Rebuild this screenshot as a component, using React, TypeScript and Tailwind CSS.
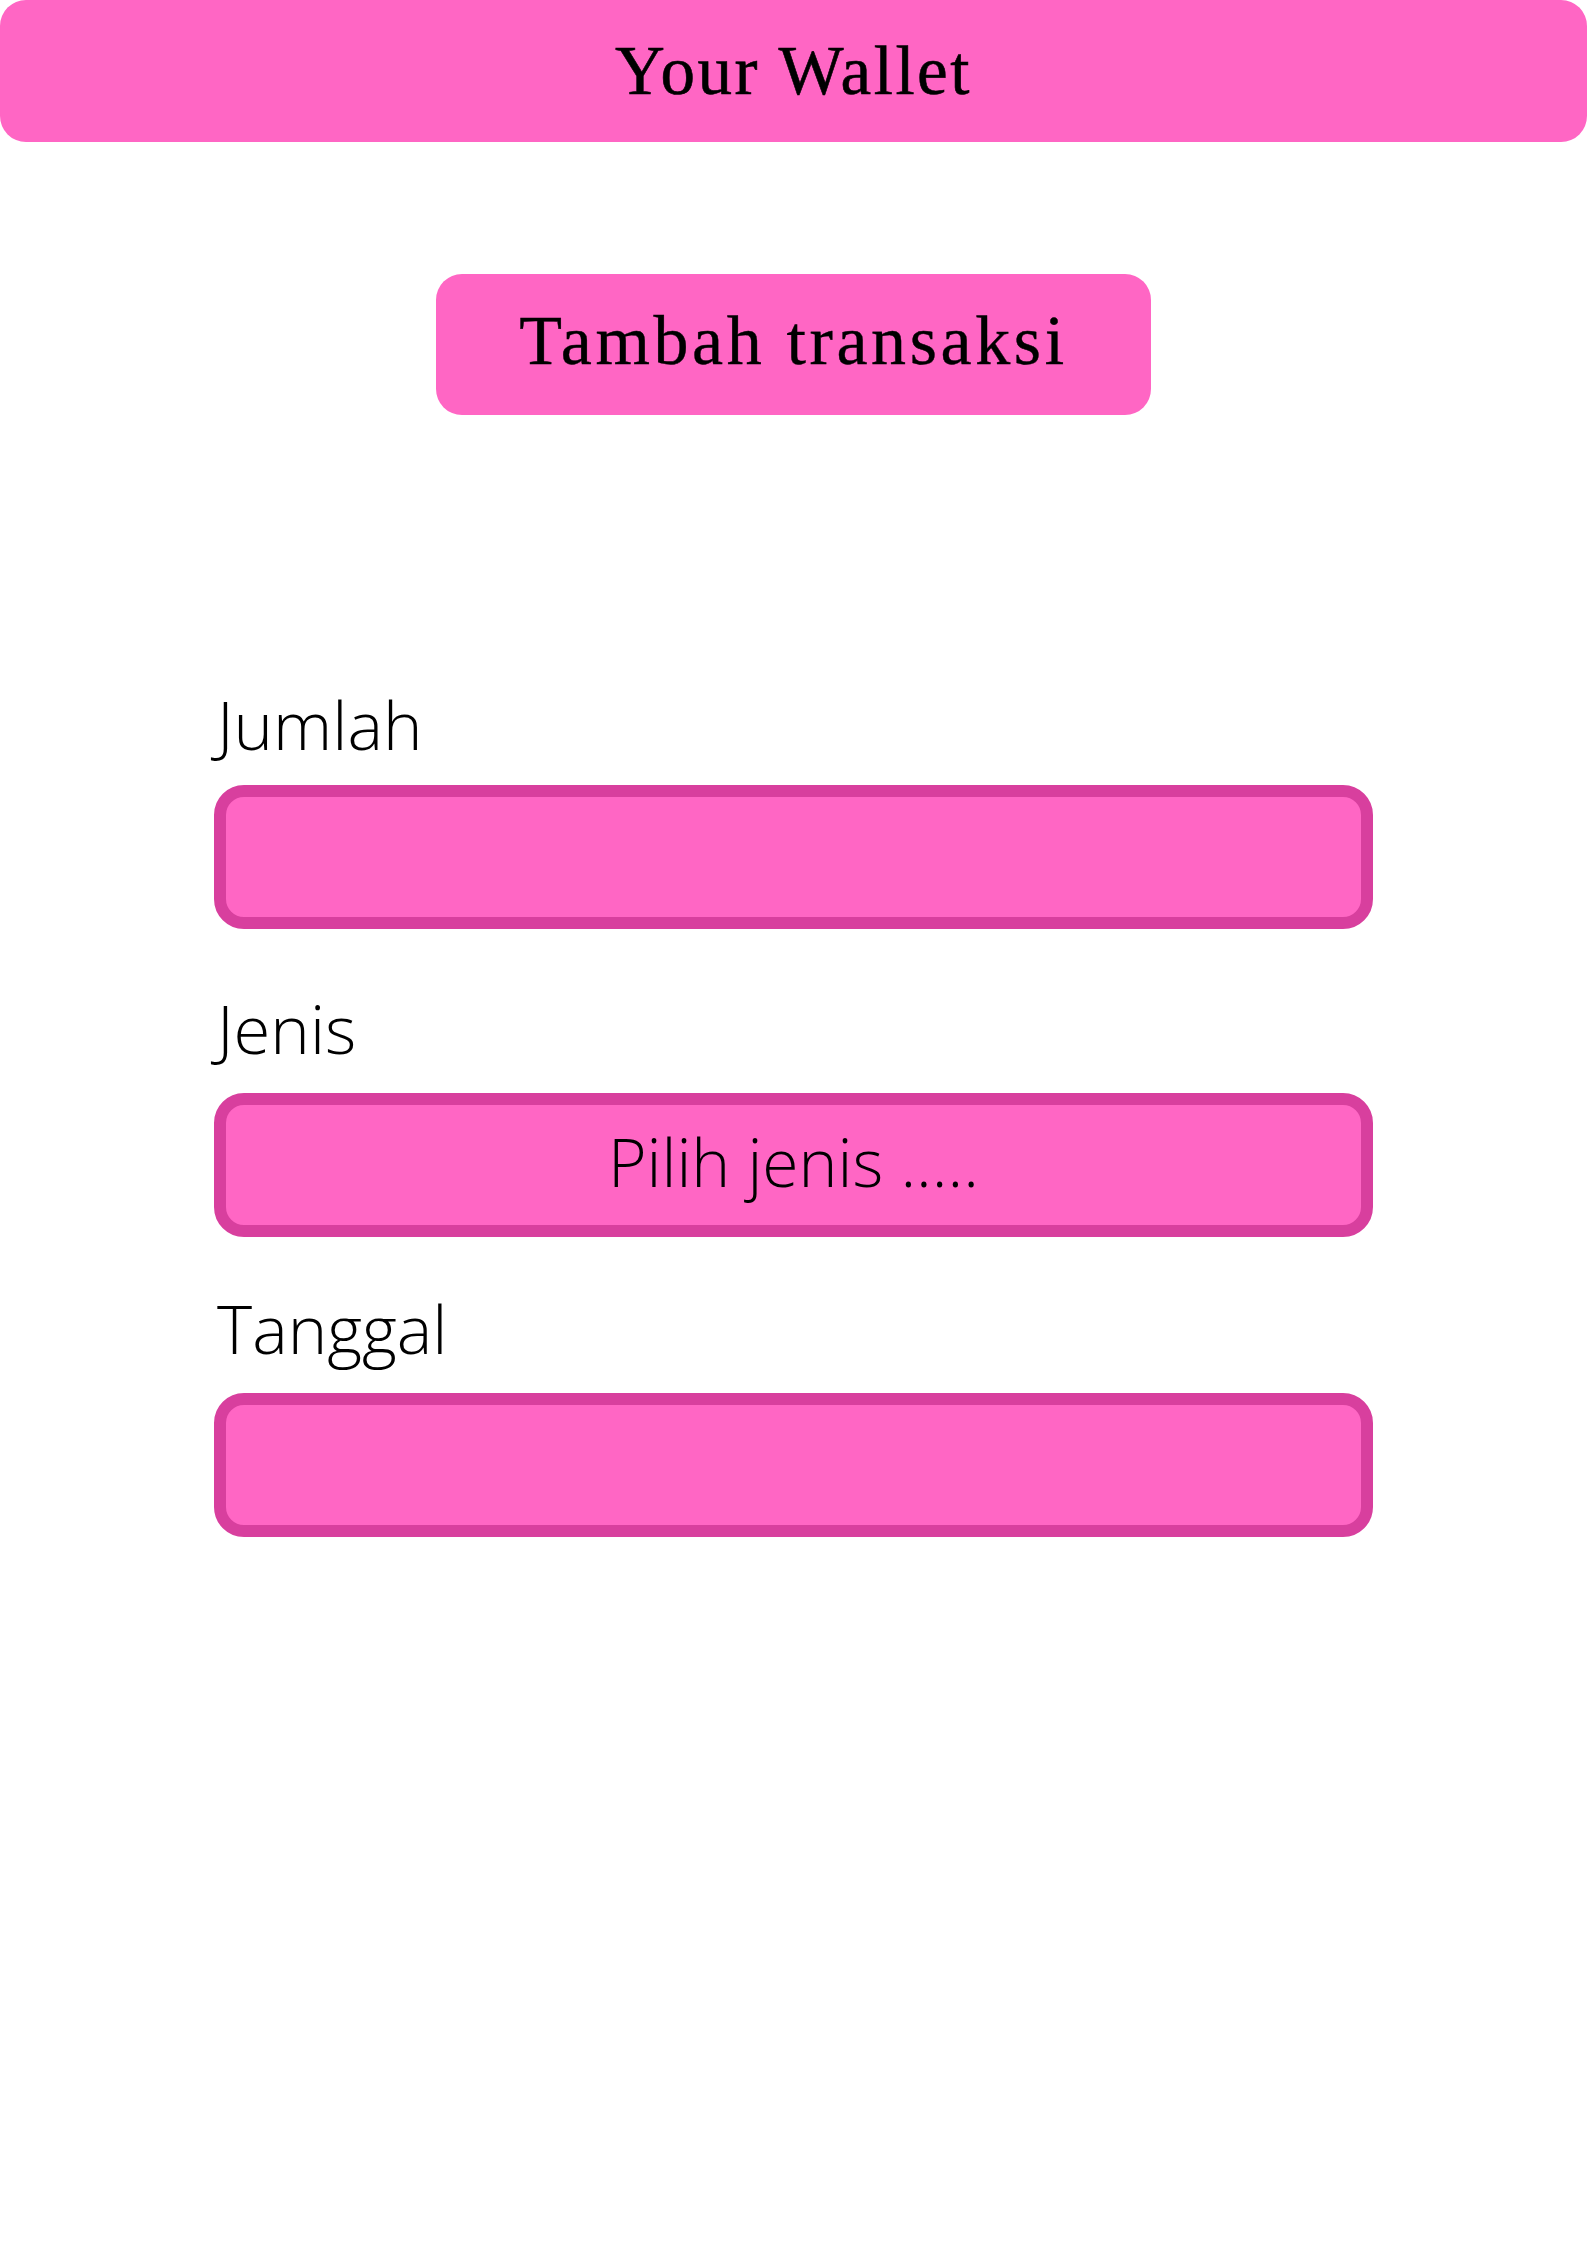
import React from "react";

const serif = { fontFamily: '"Liberation Serif", "Times New Roman", serif' };
const sans = { fontFamily: '"Open Sans", "Noto Sans", sans-serif' };

function Field({ label, children, labelClass }: { label: string; children?: React.ReactNode; labelClass: string }) {
  return (
    <div className="flex flex-col">
      <div className={`pl-[3px] text-[67px] leading-none font-light text-black ${labelClass}`} style={sans}>
        {label}
      </div>
      <div className="flex h-[144px] w-full items-center justify-center rounded-[30px] border-[12px] border-[#d83f9e] bg-[#ff66c4]">
        {children}
      </div>
    </div>
  );
}

export default function App() {
  return (
    <div className="min-h-[2245px] w-full bg-white">
      <header className="flex h-[142px] w-full items-center justify-center rounded-[26px] bg-[#ff66c4]">
        <h1 className="text-[69px] leading-none tracking-[2.5px] text-black [-webkit-text-stroke:0.6px_black]" style={serif}>
          Your Wallet
        </h1>
      </header>

      <div className="mt-[132px] flex justify-center">
        <button className="flex h-[141px] w-[715px] items-center justify-center rounded-[26px] bg-[#ff66c4] pb-[8px]">
          <span className="text-[70px] leading-none tracking-[3.6px] text-black [-webkit-text-stroke:0.4px_black]" style={serif}>
            Tambah transaksi
          </span>
        </button>
      </div>

      <div className="mx-auto mt-[276px] flex w-[1159px] flex-col">
        <Field label="Jumlah" labelClass="mb-[27px]" />
        <div className="mt-[66px]">
          <Field label="Jenis" labelClass="mb-[31px]">
            <span className="pb-[8px] text-[66px] leading-none font-light text-black" style={sans}>
              Pilih jenis .....
            </span>
          </Field>
        </div>
        <div className="mt-[58px]">
          <Field label="Tanggal" labelClass="mb-[31px]" />
        </div>
      </div>
    </div>
  );
}
